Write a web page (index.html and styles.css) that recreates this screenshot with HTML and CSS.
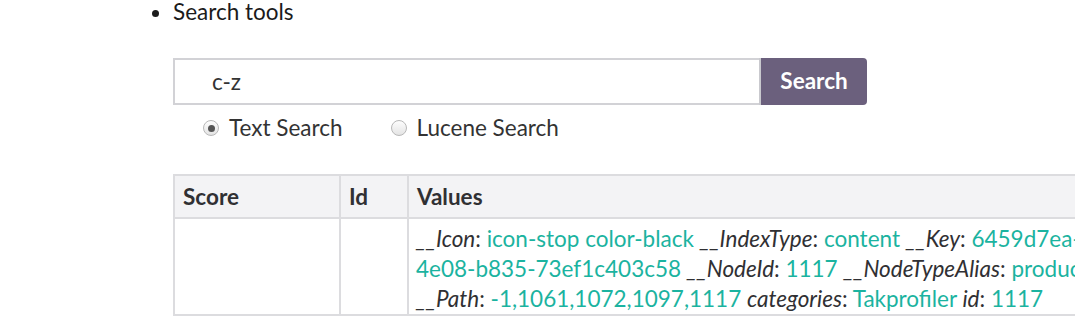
FILE: index.html
```html
<!DOCTYPE html>
<html lang="en">
<head>
    <meta charset="UTF-8">
    <title>Examine search</title>
    <link rel="stylesheet" href="styles.css">
</head>
<body>
    <ul class="tools">
        <li>Search tools</li>
    </ul>

    <div class="search-box">
        <div class="search-row">
            <input class="search-input" type="text" value="c-z">
            <button class="search-btn">Search</button>
        </div>
        <div class="search-types">
            <label class="radio"><span class="dot checked"></span>Text Search</label>
            <label class="radio"><span class="dot"></span>Lucene Search</label>
        </div>
    </div>

    <table class="results">
        <thead>
            <tr>
                <th class="col-score">Score</th>
                <th class="col-id">Id</th>
                <th class="col-values">Values</th>
            </tr>
        </thead>
        <tbody>
            <tr>
                <td></td>
                <td></td>
                <td class="values">
                    <em>__Icon</em>: <span class="val">icon-stop color-black</span>
                    <em>__IndexType</em>: <span class="val">content</span>
                    <em>__Key</em>: <span class="val">6459d7ea-4e08-b835-73ef1c403c58</span>
                    <em>__NodeId</em>: <span class="val">1117</span>
                    <em>__NodeTypeAlias</em>: <span class="val">product</span>
                    <em>__Path</em>: <span class="val">-1,1061,1072,1097,1117</span>
                    <em>categories</em>: <span class="val">Takprofiler</span>
                    <em>id</em>: <span class="val">1117</span>
                </td>
            </tr>
        </tbody>
    </table>
</body>
</html>
```
FILE: styles.css
```css
body {
    margin: 0;
    font-family: Lato, "Open Sans", sans-serif;
    font-size: 22.5px;
    color: #1b1b1b;
    background: #fff;
    overflow: hidden;
}
ul.tools {
    margin: 0;
    padding: 0 0 0 173px;
    line-height: 24px;
}
ul.tools li {
    list-style: disc;
}
.search-box {
    margin: 34px 0 0 173px;
}
.search-row {
    display: flex;
    height: 47px;
}
.search-input {
    width: 586px;
    box-sizing: border-box;
    border: 2px solid #d2d2d6;
    border-right: none;
    padding: 0 0 0 37px;
    font-family: Lato, sans-serif;
    font-size: 22.5px;
    color: #333;
    outline: none;
}
.search-btn {
    width: 108px;
    border: none;
    border-left: 2px solid #c9c9ce;
    border-radius: 0 4px 4px 0;
    background: #6b607d;
    color: #fff;
    font-family: Lato, sans-serif;
    font-weight: bold;
    font-size: 22.5px;
    padding: 0 0 2px;
}
.search-types {
    display: flex;
    margin: 10px 0 0 30px;
    line-height: 26px;
    color: #333;
}
.radio {
    display: flex;
    align-items: center;
    gap: 10px;
    margin-right: 48px;
}
.dot {
    width: 16px;
    height: 16px;
    border: 1px solid #b8b8b8;
    border-radius: 50%;
    background: linear-gradient(#fdfdfd, #e4e4e4);
    box-sizing: border-box;
    display: flex;
    align-items: center;
    justify-content: center;
}
.dot.checked::after {
    content: "";
    width: 7px;
    height: 7px;
    border-radius: 50%;
    background: #555;
}
table.results {
    margin: 33px 0 0 173px;
    border-collapse: collapse;
    width: 930px;
}
.results th,
.results td {
    border: 2px solid #dcdcdf;
    text-align: left;
    vertical-align: top;
}
.results th {
    background: #f3f3f5;
    height: 41px;
    padding: 0 8px;
    font-weight: bold;
    color: #303033;
    vertical-align: middle;
}
.col-score { width: 148px; }
.col-id { width: 50px; }
.results td.values {
    padding: 5px 8px 0 7px;
    line-height: 30px;
    color: #303033;
}
.values em {
    font-style: italic;
}
.val {
    color: #1bb3a0;
}
```
